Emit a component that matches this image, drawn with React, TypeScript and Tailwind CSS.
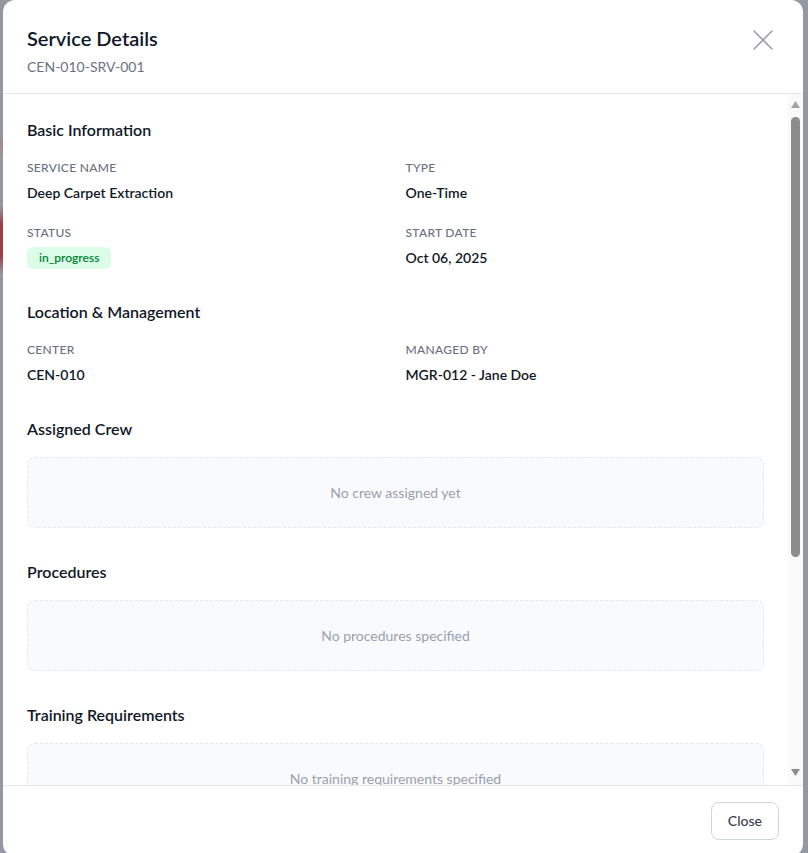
import React from 'react';

type Field = { label: string; value: React.ReactNode; badge?: boolean };

const basicInfo: Field[] = [
  { label: 'Service Name', value: 'Deep Carpet Extraction' },
  { label: 'Type', value: 'One-Time' },
  {
    label: 'Status',
    badge: true,
    value: (
      <span className="inline-flex items-center px-3 h-[22px] rounded-md bg-green-100 text-green-700 text-xs font-semibold">
        in_progress
      </span>
    ),
  },
  { label: 'Start Date', value: 'Oct 06, 2025' },
];

const location: Field[] = [
  { label: 'Center', value: 'CEN-010' },
  { label: 'Managed By', value: 'MGR-012 - Jane Doe' },
];

const emptySections = [
  { title: 'Assigned Crew', empty: 'No crew assigned yet' },
  { title: 'Procedures', empty: 'No procedures specified' },
  { title: 'Training Requirements', empty: 'No training requirements specified' },
  { title: 'Equipment', empty: 'No equipment listed' },
  { title: 'Notes', empty: 'No notes added' },
];

function FieldGrid({ fields }: { fields: Field[] }) {
  return (
    <div className="grid grid-cols-2 gap-x-5 gap-y-[22px]">
      {fields.map((f) => (
        <div key={f.label}>
          <div className="text-xs font-medium uppercase tracking-wide text-gray-500">{f.label}</div>
          {f.badge ? (
            <div className="mt-[6px] -mb-px flex">{f.value}</div>
          ) : (
            <div className="mt-[7px] text-sm font-semibold text-gray-900">{f.value}</div>
          )}
        </div>
      ))}
    </div>
  );
}

// fake classic scrollbar, the reference shows one
function Scrollbar() {
  return (
    <div className="w-[15px] shrink-0 flex flex-col items-center bg-[#f9f9f9]">
      <svg className="mt-[7px]" width="9" height="7" viewBox="0 0 9 7">
        <path d="M4.5 0L9 7H0z" fill="#a3a3a3" />
      </svg>
      <div className="mt-[9px] h-[440px] w-[9px] rounded-full bg-[#8c8c8c]" />
      <div className="flex-1" />
      <svg className="mb-[9px]" width="9" height="7" viewBox="0 0 9 7">
        <path d="M0 0H9L4.5 7z" fill="#8c8c8c" />
      </svg>
    </div>
  );
}

export default function App() {
  return (
    <div className="h-screen overflow-hidden flex bg-[#9499a1]" style={{ fontFamily: 'Lato, sans-serif' }}>
      <div className="w-[3px] shrink-0 bg-[linear-gradient(to_bottom,#9499a1_130px,#a7878f_145px,#9499a1_160px,#9499a1_205px,#a33a48_225px,#a33a48_255px,#9499a1_275px)]" />
      <div className="flex-1 h-[856px] flex flex-col bg-white rounded-xl overflow-hidden">
        {/* Header */}
        <div className="flex items-start justify-between px-6 pt-6 pb-4 border-b border-gray-200">
          <div>
            <h2 className="text-xl font-semibold text-gray-900">Service Details</h2>
            <p className="mt-[5px] text-sm text-gray-500">CEN-010-SRV-001</p>
          </div>
          <button className="mt-[6px] mr-[6px] text-gray-400 hover:text-gray-600">
            <svg width="20" height="20" viewBox="0 0 20 20" fill="none" stroke="currentColor" strokeWidth="1.6" strokeLinecap="round">
              <path d="M1 1L19 19M19 1L1 19" />
            </svg>
          </button>
        </div>

        {/* Body */}
        <div className="flex-1 min-h-0 flex">
          <div className="flex-1 overflow-hidden px-6 pt-6 pb-6 space-y-8">
            <section>
              <h3 className="mb-[18px] text-base font-semibold text-gray-900">Basic Information</h3>
              <FieldGrid fields={basicInfo} />
            </section>

            <section>
              <h3 className="mb-[18px] text-base font-semibold text-gray-900">Location &amp; Management</h3>
              <FieldGrid fields={location} />
            </section>

            {emptySections.map((s) => (
              <section key={s.title}>
                <h3 className="mb-4 text-base font-semibold text-gray-900">{s.title}</h3>
                <div className="h-[71px] flex items-center justify-center rounded-lg border border-dashed border-gray-200 bg-gray-50 text-sm text-gray-400">
                  {s.empty}
                </div>
              </section>
            ))}
          </div>
          <Scrollbar />
        </div>

        {/* Footer */}
        <div className="flex justify-end px-6 py-4 border-t border-gray-200">
          <button className="h-[38px] px-4 rounded-lg border border-gray-300 bg-white text-sm font-medium text-gray-700">
            Close
          </button>
        </div>
      </div>
      <div className="w-[5px] shrink-0" />
    </div>
  );
}
